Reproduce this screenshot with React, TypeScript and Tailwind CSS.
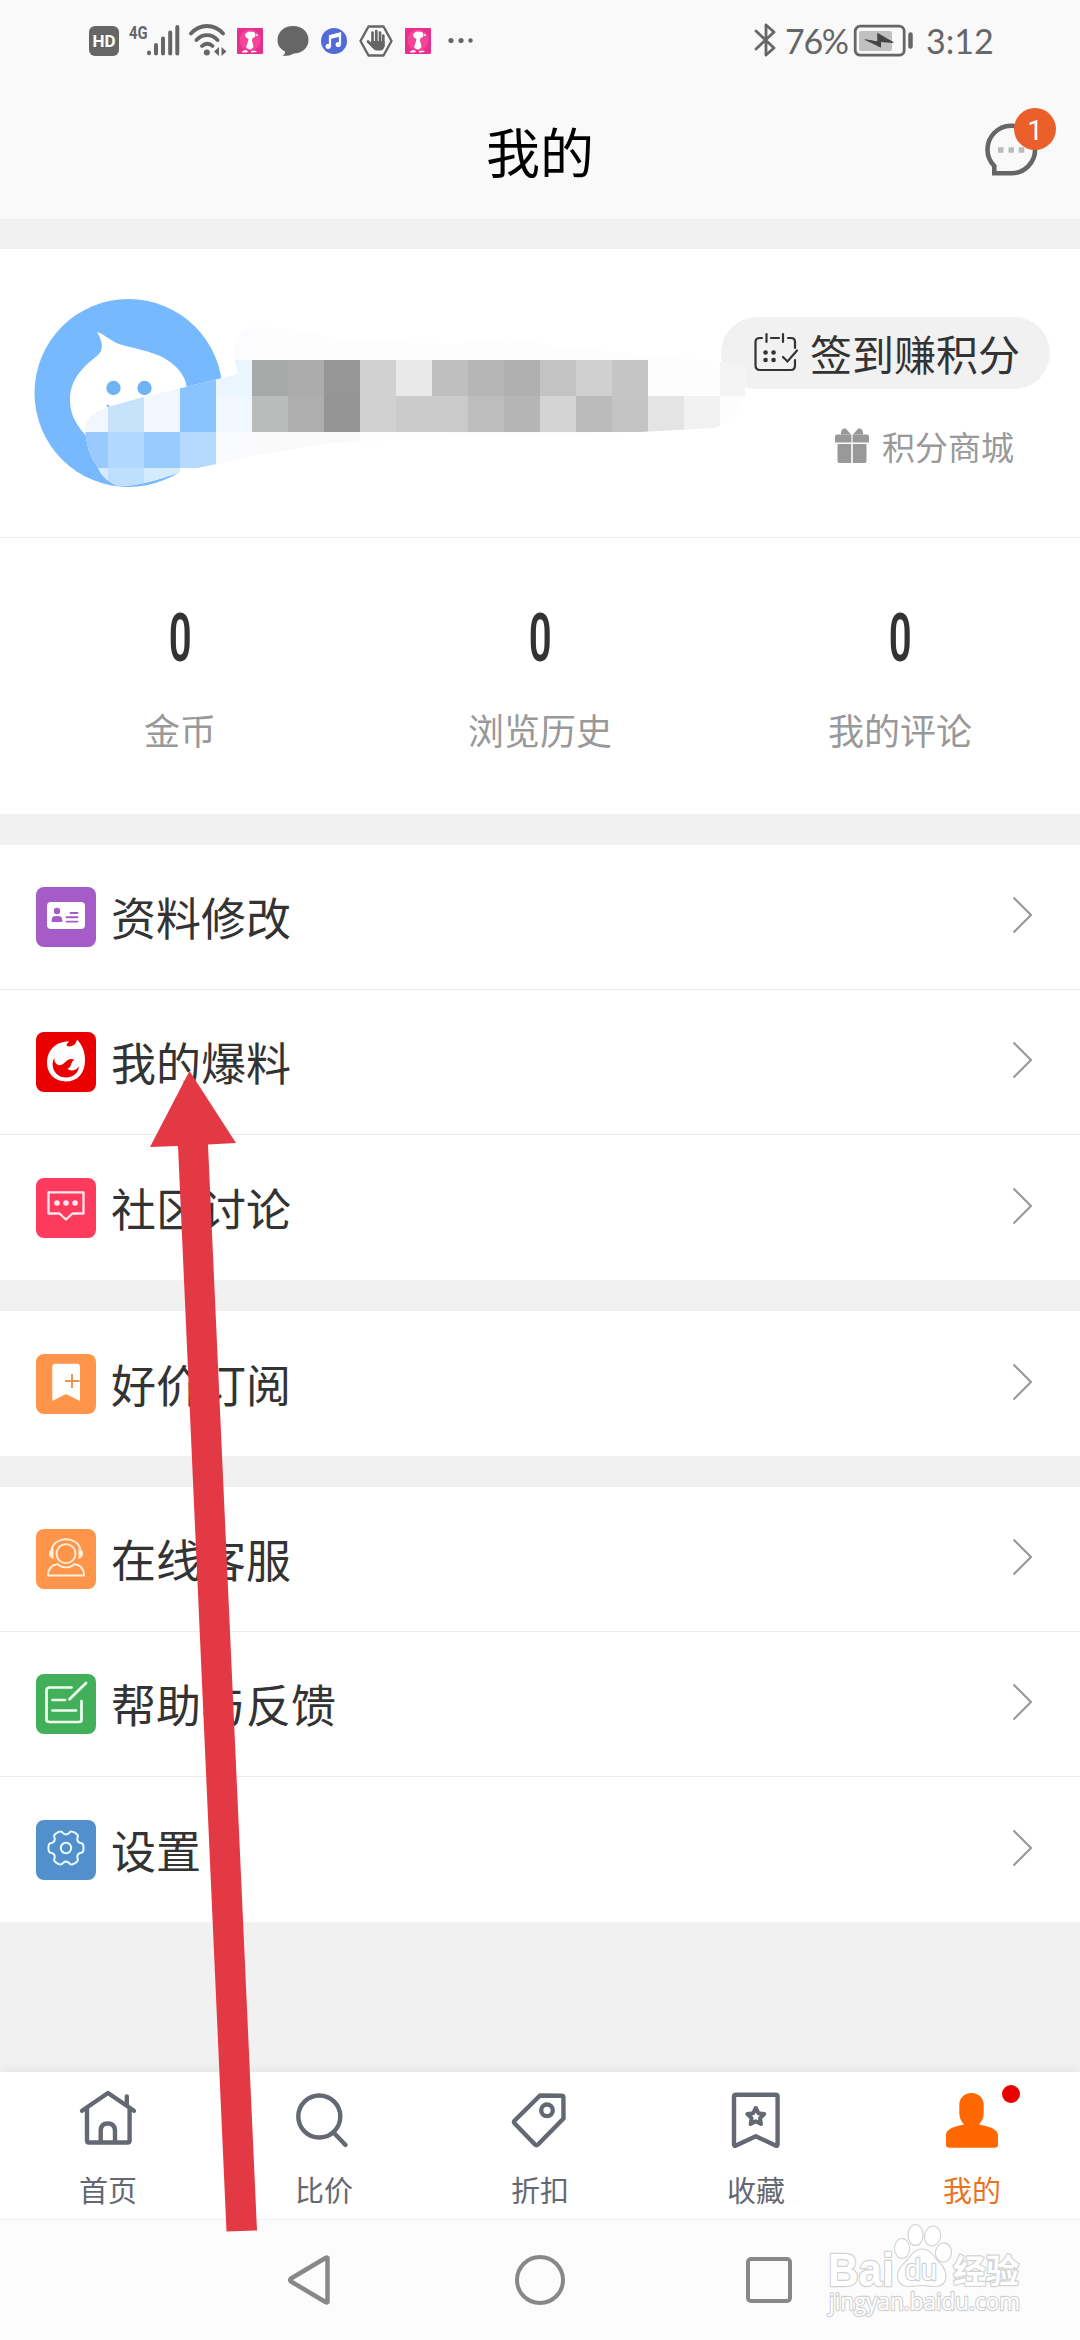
import type { ReactNode } from 'react';

const fontStack = 'font-["Noto_Sans_CJK_SC",sans-serif]';

const MOSAIC_TOP = ['#a5a9a8', '#acacac', '#969696', '#d1d1d1', '#e9e9e9', '#bfbfbf', '#b6b6b6', '#b0b0b0', '#c3c3c3', '#d0d0d0', '#c5c5c5'];
const MOSAIC_BOTTOM = ['#babcbb', '#aeaeae', '#959595', '#d1d1d1', '#cbcbcb', '#cbcbcb', '#bdbdbd', '#b5b5b5', '#d4d4d4', '#bbbbbb', '#c4c4c4'];

function PinkAppIcon() {
  return (
    <svg className="h-[26px] w-[26px]" viewBox="0 0 26 26">
      <rect width="26" height="26" rx="1" fill="#e7308e" />
      <circle cx="13" cy="12" r="10.5" fill="#f4459b" />
      <path
        d="M9 5 12 3.5 17 4 18.5 6 18 9 15.5 10 15 13 16 16 16.500 19 14 21.500 11 21 9 19 10.500 15 11.500 11 9 9.500 8 7Z M5 23.500 8 22 11 23 10 24.500 5 24.500Z M14 23 18 22.500 20 24 14 24.500Z"
        fill="#fff"
      />
      <circle cx="20" cy="7" r="1" fill="#fff" />
    </svg>
  );
}

function StatusBar() {
  return (
    <div className="flex h-20 items-start pt-6 text-[#666]">
      <div className="ml-[89px] mt-[2px] flex h-[30px] w-[30px] items-center justify-center rounded-[6px] bg-[#666] font-['Roboto',sans-serif] text-[17px] font-bold leading-none text-white">
        HD
      </div>
      <span className="ml-[10px] w-[18px] origin-left scale-x-[0.78] font-['Roboto',sans-serif] text-[19px] font-bold leading-[18px]">
        4G
      </span>
      <svg className="h-8 w-[34px]" viewBox="0 0 34 32" stroke="currentColor" strokeWidth="4" strokeLinecap="round">
        <path d="M2 28.500v.8M9 21v8.500M16 14.500v15M23.200 8.500v21M30.300 3v26.500" />
      </svg>
      <svg className="ml-2 h-8 w-[38px]" viewBox="0 0 38 32" fill="none" stroke="currentColor" strokeWidth="3.800" strokeLinecap="round">
        <path d="M2 9.500C11-.5 25-.5 34 9.500M7.500 16c6-6.500 15-6.500 21 0M13 22c3-3 7.500-3 10.500 0" />
        <circle cx="17.800" cy="28.500" r="3" fill="currentColor" stroke="none" />
        <path d="M30 23v9l-5-4.500ZM32.500 23v9l5-4.500Z" fill="currentColor" stroke="none" />
      </svg>
      <div className="ml-[10px] mt-1"><PinkAppIcon /></div>
      <svg className="ml-[14px] mt-[2px] h-[30px] w-8" viewBox="0 0 32 30" fill="currentColor">
        <path d="M16 0C25 0 31.500 6 31.500 14S25 27.500 17 27.500q-4 2.500-11.500 2.500 3-2 2.500-4.500C3 23 .5 19 .5 14 .5 6 7 0 16 0Z" />
      </svg>
      <svg className="ml-3 mt-1 h-[26px] w-[26px]" viewBox="0 0 26 26">
        <circle cx="13" cy="13" r="13" fill="#526bd6" />
        <path d="M9 18V8l10-2.500V16" fill="none" stroke="#fff" strokeWidth="2.200" />
        <path d="M9 9.500 19 7" stroke="#fff" strokeWidth="3" />
        <circle cx="7.200" cy="18.300" r="2.600" fill="#fff" />
        <circle cx="17.200" cy="16.500" r="2.600" fill="#fff" />
      </svg>
      <svg className="ml-3 h-[34px] w-[34px]" viewBox="0 0 34 34">
        <path d="M9.500 2.500h15l8 14.500-8 14.500h-15L1.500 17Z" fill="none" stroke="#666" strokeWidth="2.400" strokeLinejoin="round" />
        <path d="M13.500 8.500v12M17.300 7v12M21 8.500v12M24.300 11.500V22M9 17.500l5 5" stroke="#666" strokeWidth="2.700" strokeLinecap="round" />
        <path d="M12 17h13.500v5.500q-1 4-4 4H17q-2.500-.5-5-5Z" fill="#666" />
      </svg>
      <div className="ml-3 mt-1"><PinkAppIcon /></div>
      <svg className="ml-[17px] mt-[13px] h-[6px] w-[26px]" viewBox="0 0 26 6" fill="currentColor">
        <circle cx="3" cy="3.500" r="2.600" />
        <circle cx="13" cy="3.500" r="2.600" />
        <circle cx="22.500" cy="3.500" r="2.200" />
      </svg>
      <svg className="ml-auto -mt-px h-[34px] w-[22px]" viewBox="0 0 22 34" fill="none" stroke="currentColor" strokeWidth="2.800" strokeLinecap="round" strokeLinejoin="round">
        <path d="M2 8 20 25l-8 7V2l8 7L2 26" />
      </svg>
      <span className="-mt-px ml-[9px] w-[68px] font-['Lato',sans-serif] text-[34px] leading-[36px] tracking-[-1.300px]">76%</span>
      <svg className="h-[34px] w-[62px]" viewBox="0 0 62 34">
        <rect x="2.200" y="2.200" width="49" height="29" rx="5" fill="none" stroke="#666" strokeWidth="2.800" />
        <rect x="6" y="7" width="33" height="20" rx="2" fill="#c0c0c0" />
        <path d="M11 15.500 24.500 17.500V9L41 18.500 28 17.500v6Z" fill="#444" />
        <path d="M24.500 9v8.500L11 15l10 5 6.500 3.500V18L41 19Z" fill="#444" />
        <path d="M57.500 10.500v12" stroke="#666" strokeWidth="4.500" strokeLinecap="round" />
      </svg>
      <span className="-mt-px ml-[11px] mr-[88px] w-[66px] whitespace-nowrap font-['Lato',sans-serif] text-[34px] leading-[36px]">3:12</span>
    </div>
  );
}

function Header() {
  return (
    <header className="relative flex h-[139px] items-center justify-center text-black">
      <h1 className="mt-[2px] text-[54px] leading-none">我的</h1>
      <div className="absolute left-[984px] top-[42px]">
        <svg className="h-[56px] w-[56px]" viewBox="0 0 56 56">
          <path d="M10.300 51.300V44C5.500 39 3.500 33 3.500 28A23.800 23.800 0 1 1 27.500 51.300Z" fill="none" stroke="#666" strokeWidth="4.600" />
          <path d="M14 25.300h5.500v5.500H14ZM24.500 25.300H30v5.500h-5.500ZM34.800 25.300h5.500v5.500h-5.500Z" fill="#bbb" />
        </svg>
        <span className="absolute left-[30px] top-[-14px] flex h-[42px] w-[42px] items-center justify-center rounded-full bg-[#eb5f2a] pt-[3px] font-['Roboto',sans-serif] text-[28px] leading-none text-white">
          1
        </span>
      </div>
    </header>
  );
}

// Avatar and the pixelated user name share one canvas because the mosaic runs across both.
function ProfileArt() {
  return (
    <svg className="relative z-10 h-[288px] w-[720px] shrink-0 overflow-visible" viewBox="0 249 720 288">
      <defs>
        <clipPath id="smudge">
          <path d="M85 428C87 417 94 412 108 407L140 398 239 374Q232 360 236 342 240 330 252 327 300 327 340 340L460 344Q510 330 550 346L720 362 745 366V396Q738 418 715 428L640 432 400 440 330 443 252 456 180 472Q140 487 118 486 103 480 98 468 86 452 85 428Z" />
        </clipPath>
      </defs>
      <circle cx="128.500" cy="393" r="94" fill="#77b9fe" />
      <path
        d="M97 332C103 333 109 340 119 344C132 348 151 351 164 358C181 368 187 379 187 392V450H100C83 433 70 421 70 400C70 379 83 367 97 356C104 350 103 342 97 332Z"
        fill="#fff"
      />
      <circle cx="113.500" cy="388" r="7.200" fill="#6fb3f5" />
      <circle cx="144.500" cy="388" r="7.200" fill="#6fb3f5" />
      <path d="M107 405q4 5 10 2" fill="none" stroke="#6fb3f5" strokeWidth="2" />
      <g clipPath="url(#smudge)" shapeRendering="crispEdges">
        <rect x="72" y="324" width="684" height="168" fill="#fdfdfd" />
        <rect x="230" y="324" width="22" height="36" fill="#fafcff" />
        <rect x="216" y="360" width="36" height="36" fill="#eaf5ff" />
        <rect x="216" y="396" width="36" height="36" fill="#f0f7ff" />
        <rect x="216" y="432" width="36" height="36" fill="#f9fbff" />
        <rect x="252" y="432" width="108" height="36" fill="#fafafa" />
        <rect x="72" y="396" width="36" height="36" fill="#f0f7ff" />
        <rect x="108" y="360" width="36" height="72" fill="#c7e2fb" />
        <rect x="144" y="360" width="36" height="72" fill="#f0f7ff" />
        <rect x="180" y="360" width="36" height="72" fill="#8ac4fe" />
        <rect x="72" y="432" width="36" height="36" fill="#98caff" />
        <rect x="108" y="432" width="36" height="36" fill="#b2d8ff" />
        <rect x="144" y="432" width="36" height="36" fill="#98ccff" />
        <rect x="180" y="432" width="36" height="36" fill="#b6daff" />
        <rect x="72" y="468" width="36" height="24" fill="#d6eafe" />
        <rect x="108" y="468" width="36" height="24" fill="#bedffe" />
        <rect x="144" y="468" width="36" height="24" fill="#d6eafe" />
        {MOSAIC_TOP.map((fill, i) => (
          <rect key={`t${i}`} x={252 + i * 36} y="360" width="36" height="36" fill={fill} />
        ))}
        {MOSAIC_BOTTOM.map((fill, i) => (
          <rect key={`b${i}`} x={252 + i * 36} y="396" width="36" height="36" fill={fill} />
        ))}
        <rect x="648" y="396" width="36" height="36" fill="#e4e4e4" />
        <rect x="684" y="396" width="36" height="36" fill="#f2f2f2" />
        <rect x="720" y="360" width="26" height="36" fill="#f4f4f4" />
      </g>
    </svg>
  );
}

function Profile() {
  return (
    <section className="flex h-[289px] items-start border-b border-[#ececec] bg-white">
      <ProfileArt />
      <div className="ml-px mt-[68px]">
        <div className="flex h-[72px] w-[329px] items-center rounded-full bg-[#f1f1f1] pl-8">
          <svg className="h-11 w-[46px]" viewBox="0 0 46 44" fill="none" stroke="#333" strokeWidth="2.200" strokeLinecap="round">
            <path d="M9 7H7Q2.500 7 2.500 11V34Q2.500 39 7 39H38Q42 39 42 34V29M18 7h8M35 7h3q4 0 4 4v6M13.500 3v8M30 3v8" />
            <path d="m30 26 4.500 4.500L44 19.500" />
            <path d="M12.500 21.500h.1M20.500 21.500h.1M12.500 29h.1M20.500 29h.1" strokeWidth="4.500" />
          </svg>
          <span className="ml-[11px] text-[42px] leading-none text-[#333]">签到赚积分</span>
        </div>
        <div className="ml-[114px] mt-[39px] flex h-9 items-center text-[#999]">
          <svg className="h-9 w-[34px]" viewBox="0 0 34 36" fill="currentColor">
            <path d="M6 6.500C5.500 2 8-.5 11 .8L16 6.500ZM28 6.500C28.500 2 26-.5 23 .8L18 6.500Z" />
            <path d="M2 6.500H16.400V14.500H0V8.500Q0 6.500 2 6.500ZM17.600 6.500H32Q34 6.500 34 8.500V14.500H17.600Z" />
            <path d="M2.500 16H16.200V35H4.500Q2.500 35 2.500 33ZM17.800 16H31.500V33Q31.500 35 29.500 35H17.800Z" />
          </svg>
          <span className="ml-[13px] text-[33px] leading-none">积分商城</span>
        </div>
      </div>
    </section>
  );
}

function Stats() {
  return (
    <section className="grid h-[276px] grid-cols-3 bg-white pt-[67px]">
      {['金币', '浏览历史', '我的评论'].map((label) => (
        <div key={label} className="flex flex-col items-center">
          <span className="h-[67px] scale-x-[0.6] font-['Roboto',sans-serif] text-[67px] font-semibold leading-none text-[#333]">0</span>
          <span className="mt-[39px] text-[36px] leading-none text-[#999]">{label}</span>
        </div>
      ))}
    </section>
  );
}

function gearPath(cx: number, cy: number) {
  const at = (r: number, deg: number) => {
    const a = (deg * Math.PI) / 180;
    return `${(cx + r * Math.cos(a)).toFixed(2)} ${(cy + r * Math.sin(a)).toFixed(2)}`;
  };
  let d = `M${at(17.5, -10)}`;
  for (let a = 0; a < 360; a += 60) {
    d += `Q${at(18, a)} ${at(17.5, a + 10)}Q${at(17.5, a + 16)} ${at(15, a + 19)}Q${at(12.5, a + 30)} ${at(15, a + 41)}Q${at(17.5, a + 44)} ${at(17.5, a + 50)}`;
  }
  return `${d}Z`;
}

type MenuItem = { label: string; icon: ReactNode };

const GROUPS: MenuItem[][] = [
  [
    {
      label: '资料修改',
      icon: (
        <>
          <rect width="60" height="60" rx="8" fill="#a55cc9" />
          <rect x="11" y="15" width="38" height="27" rx="4" fill="#fff" />
          <g fill="#a55cc9">
            <circle cx="21" cy="24" r="3.200" />
            <path d="M15.700 35V33q0-4 4-4h2.600q4 0 4 4v2Z" />
          </g>
          <path d="M34.500 26H41.500M30.500 30.300H41.500M30.500 34.600H41.500" stroke="#a55cc9" strokeWidth="1.900" strokeLinecap="round" />
        </>
      ),
    },
    {
      label: '我的爆料',
      icon: (
        <>
          <rect width="60" height="60" rx="8" fill="#ea0000" />
          <path
            d="M41 7.500C46 13 49 19 49 28C49 42 41 49.500 30 49.500C18 49.500 11 41 11 31C11 18 20 9 33.500 9.500C31 11 30 13 31 14C35 15.500 40 13 41 7.500Z"
            fill="#fff"
          />
          <path
            d="M18.500 25.500C13.500 34 19 45.500 30 45.500C38 45.500 42.500 40 43 34.500C39.500 39 34 39.500 31.500 36.500C36 36 34 30 38.500 27.500C31 25 29 32 25 33C21 34 17.500 30 18.500 25.500Z"
            fill="#ea0000"
          />
        </>
      ),
    },
    {
      label: '社区讨论',
      icon: (
        <>
          <rect width="60" height="60" rx="8" fill="#fe3a5d" />
          <path d="M12.500 14.300H47.500V35.500H36.500L30 41.500 23.500 35.500H12.500Z" fill="none" stroke="#ffe8ed" strokeWidth="2.300" strokeLinejoin="round" />
          <g fill="#ffe8ed">
            <circle cx="21" cy="25" r="2.800" />
            <circle cx="30" cy="25" r="2.800" />
            <circle cx="39" cy="25" r="2.800" />
          </g>
        </>
      ),
    },
  ],
  [
    {
      label: '好价订阅',
      icon: (
        <>
          <rect width="60" height="60" rx="8" fill="#ff954a" />
          <path d="M19 9.700H41Q44 9.700 44 12.700V47L30 40 16.300 47V12.700Q16.300 9.700 19 9.700Z" fill="#fff" />
          <path d="M29 27H43.500M36 20V34" stroke="#eb944f" strokeWidth="2" />
        </>
      ),
    },
  ],
  [
    {
      label: '在线客服',
      icon: (
        <>
          <rect width="60" height="60" rx="8" fill="#ff954a" />
          <g fill="none" stroke="#fff0da" strokeWidth="1.800" strokeLinejoin="round">
            <circle cx="30" cy="24.700" r="9.500" />
            <path d="M15.500 20C19 7 41 7 44.500 20" />
            <path d="M12 46.500C12 39.500 16 36 21.500 35C26 39.500 34 39.500 38.500 35C44 36 48 39.500 48 46.500Z" />
          </g>
          <path d="M17.500 19V30Q13 28.500 13 24.500T17.500 19ZM42.500 19V30Q47 28.500 47 24.500T42.500 19Z" fill="#fff0da" />
        </>
      ),
    },
    {
      label: '帮助与反馈',
      icon: (
        <>
          <rect width="60" height="60" rx="8" fill="#42b05a" />
          <path
            d="M35.500 13.500H13.500Q10.500 13.500 10.500 16.500V45.500Q10.500 48 13.500 48H43Q45.500 48 45.500 45.500V27M16.500 26H29M16.500 36.500H40M33.500 25.300 50 9"
            fill="none"
            stroke="#f0fff2"
            strokeWidth="2.700"
            strokeLinecap="round"
            strokeLinejoin="round"
          />
        </>
      ),
    },
    {
      label: '设置',
      icon: (
        <>
          <rect width="60" height="60" rx="8" fill="#528fcd" />
          <g fill="none" stroke="#e9fbff" strokeWidth="2" strokeLinejoin="round">
            <path d={gearPath(30, 28)} />
            <circle cx="30" cy="28" r="5.200" />
          </g>
        </>
      ),
    },
  ],
];

function MenuGroup({ items }: { items: MenuItem[] }) {
  return (
    <ul className="divide-y divide-[#ebebeb] bg-white">
      {items.map(({ label, icon }) => (
        <li key={label} className="flex h-[145px] items-center pl-9 pr-12">
          <svg className="h-[60px] w-[60px]" viewBox="0 0 60 60">{icon}</svg>
          <span className="-mt-px ml-[15px] text-[45px] leading-none text-[#333]">{label}</span>
          <svg className="-mt-1 ml-auto h-[38px] w-5" viewBox="0 0 20 38" fill="none" stroke="#999" strokeWidth="2.200">
            <path d="M1.500 1.500 19 19 1.500 36.500" />
          </svg>
        </li>
      ))}
    </ul>
  );
}

const TABS: MenuItem[] = [
  {
    label: '首页',
    icon: (
      <>
        <path d="M4 21.700 30 4 56 21.700M9 20V51.500Q9 53.500 11 53.500H49.500Q51.600 53.500 51.600 51.500V20M48.800 7.500V16" />
        <path d="M22.700 53V42Q22.700 34.500 29.800 34.500T37 42V53" />
      </>
    ),
  },
  {
    label: '比价',
    icon: (
      <>
        <circle cx="25.300" cy="27.500" r="21" />
        <path d="M39.600 43.500 51.500 56" />
      </>
    ),
  },
  {
    label: '折扣',
    icon: (
      <>
        <path d="M4.700 31.500 30 6.500 51.500 6.700Q53.400 6.700 53.400 8.500L53.500 29.500 28 55.500Q26.400 57 25 55.500L4.700 34.500Q3.300 33 4.700 31.500Z" />
        <circle cx="37" cy="21.300" r="5.800" />
      </>
    ),
  },
  {
    label: '收藏',
    icon: (
      <>
        <path d="M10 5.700H49.700Q51.600 5.700 51.600 7.600V55Q51.600 57.500 49.500 56.500L29.800 47.300 10 56.500Q8 57.500 8 55V7.600Q8 5.700 10 5.700Z" />
        <path d="M29.800 19 32.400 24.200 38.200 25 34 29.200 35 35 29.800 32.300 24.600 35 25.600 29.200 21.400 25 27.200 24.200Z" strokeWidth="4" />
      </>
    ),
  },
  {
    label: '我的',
    icon: (
      <path
        d="M29.500 4C37 4 41.700 9 41.700 16V24C41.700 29 40 32 37 35.500C46 37 56 40 56 46V55.500Q56 58.700 52.500 58.700H7.500Q4 58.700 4 55.500V46C4 40 13 37 22 35.500C19 32 17.300 29 17.300 24V16C17.300 9 22 4 29.500 4Z"
        fill="currentColor"
        stroke="none"
      />
    ),
  },
];

function TabBar() {
  return (
    <nav className="grid h-[147px] grid-cols-5 bg-white shadow-[0_-2px_10px_rgba(0,0,0,0.05)]">
      {TABS.map(({ label, icon }, i) => {
        const active = i === TABS.length - 1;
        return (
          <div key={label} className={`relative flex flex-col items-center pt-[17px] ${active ? 'text-[#ff6700]' : 'text-[#646872]'}`}>
            <svg className="h-[60px] w-[60px]" viewBox="0 0 60 60" fill="none" stroke="currentColor" strokeWidth="4.400" strokeLinecap="round" strokeLinejoin="round">
              {icon}
            </svg>
            <span className={`mt-[26px] text-[29px] leading-none ${active ? 'text-[#ea731d]' : ''}`}>{label}</span>
            {active && <span className="absolute left-[138px] top-[13px] h-[18px] w-[18px] rounded-full bg-[#ea0000]" />}
          </div>
        );
      })}
    </nav>
  );
}

function Watermark() {
  return (
    <svg
      className="absolute left-[824px] top-0 h-[110px] w-[204px] overflow-visible"
      viewBox="824 2220 204 110"
      fill="#fff"
      stroke="#d2d2d2"
      strokeWidth="2.400"
      strokeLinejoin="round"
      paintOrder="stroke"
    >
      <text x="828" y="2286" fontFamily="Liberation Sans, sans-serif" fontWeight="bold" fontSize="46" textLength="66" lengthAdjust="spacingAndGlyphs">Bai</text>
      <g strokeWidth="2.200">
        <ellipse cx="902" cy="2248.500" rx="7" ry="9.500" />
        <ellipse cx="915.500" cy="2235" rx="7" ry="10" />
        <ellipse cx="932.500" cy="2236" rx="7.500" ry="9.500" transform="rotate(12 932.500 2236)" />
        <ellipse cx="943.500" cy="2252.500" rx="7.500" ry="9" transform="rotate(10 943.500 2252.500)" />
        <path d="M922 2249.500C931 2249.500 934 2258 940 2264C947 2271 949 2286 935 2286C929 2286 926 2285 922 2285C917 2285 914 2286 909 2286C895 2286 896 2271 904 2264C911 2258 913 2249.500 922 2249.500Z" />
      </g>
      <text x="905" y="2280" fontFamily="Liberation Sans, sans-serif" fontSize="29" textLength="32" lengthAdjust="spacingAndGlyphs">du</text>
      <text x="953" y="2283" fontFamily="Noto Sans CJK SC, sans-serif" fontWeight="bold" fontSize="33">经验</text>
      <text x="829" y="2310" fontFamily="Open Sans, sans-serif" fontSize="23" textLength="191" lengthAdjust="spacingAndGlyphs">jingyan.baidu.com</text>
    </svg>
  );
}

function SystemNav() {
  return (
    <div className="relative flex h-[121px] items-center border-t border-[#efefef] bg-[#fcfcfc]">
      <svg className="ml-[286px] h-[52px] w-[46px]" viewBox="0 0 46 52" fill="none" stroke="#888" strokeWidth="4.500" strokeLinejoin="round">
        <path d="M41.500 4V48Q41 49 39.500 48L5 27.500Q3.500 26 5 24.500L39.500 4Q41 3 41.500 4Z" />
      </svg>
      <div className="ml-[183px] h-[50px] w-[50px] rounded-full border-[4.500px] border-[#888]" />
      <div className="ml-[181px] h-[46px] w-[46px] rounded-[5px] border-[4.500px] border-[#888]" />
      <Watermark />
    </div>
  );
}

export default function App() {
  return (
    <div className={`relative flex h-[2340px] w-[1080px] flex-col overflow-hidden bg-[#f1f1f1] ${fontStack}`}>
      <div className="bg-[#f9f9f9]">
        <StatusBar />
        <Header />
      </div>
      <div className="mt-[30px]">
        <Profile />
        <Stats />
      </div>
      <div className="mt-[31px] flex flex-col gap-[31px]">
        {GROUPS.map((items) => (
          <MenuGroup key={items[0].label} items={items} />
        ))}
      </div>
      <div className="mt-auto">
        <TabBar />
        <SystemNav />
      </div>
      {/* pointer arrow */}
      <svg className="absolute left-[140px] top-[1060px] h-[1180px] w-[130px]" viewBox="140 1060 130 1180">
        <path d="M189.500 1071 236 1143 208 1144.500 257 2230.500 226.500 2231.500 178 1146 150 1147Z" fill="#e33945" />
      </svg>
    </div>
  );
}
